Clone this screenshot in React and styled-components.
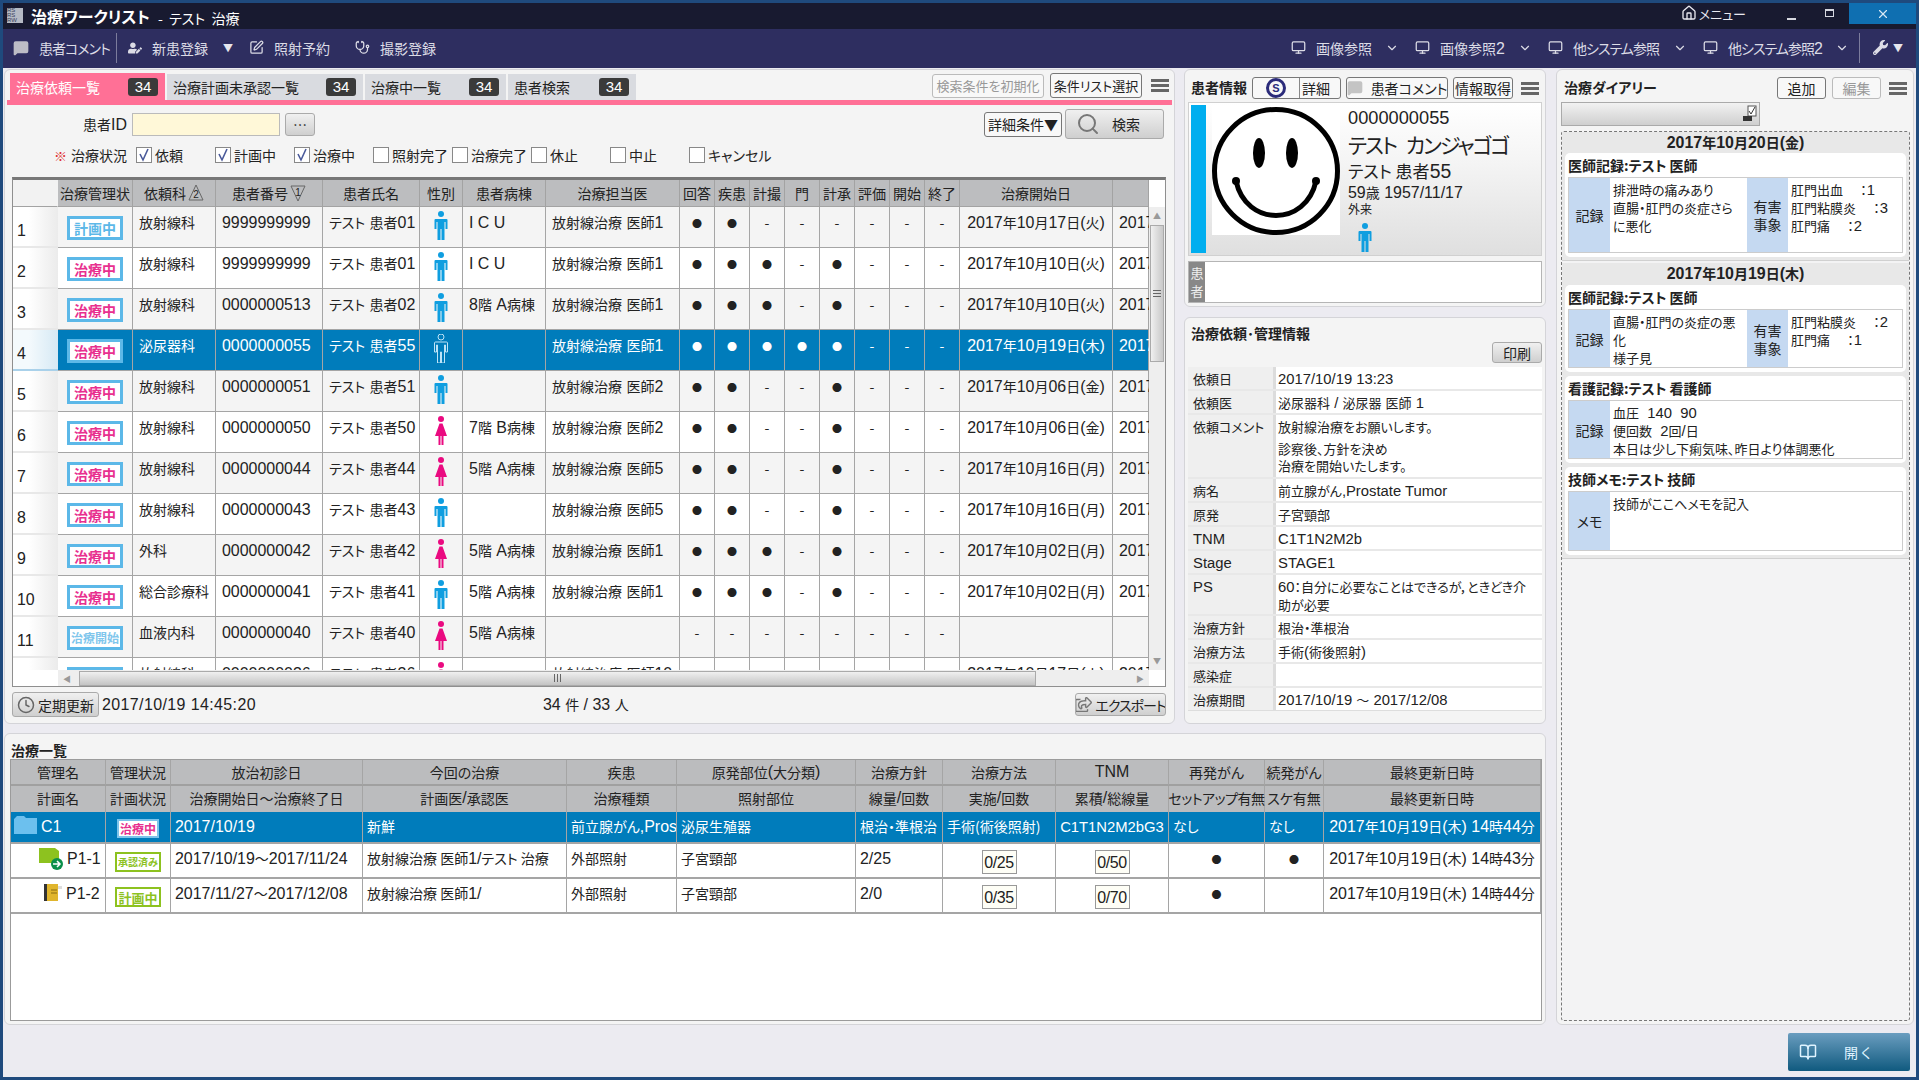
import React from 'react'
import styled, { createGlobalStyle } from 'styled-components'
import { BookOpen, ChevronDown, Clock, House, MessageSquare, Monitor, Search, SquarePen, Stethoscope, X } from 'lucide-react'
import { FaRegShareSquare, FaUserEdit, FaWrench } from 'react-icons/fa'

const GlobalStyle = createGlobalStyle`
  * { box-sizing: border-box; }
  html, body { margin: 0; padding: 0; }
  body {
    width: 1919px;
    height: 1080px;
    overflow: hidden;
    background: #1f4a7d;
    color: #222;
    font-family: "Noto Sans CJK JP", "Liberation Sans", sans-serif;
    font-size: 14px;
    font-feature-settings: "palt";
  }
`;

const Frame = styled.div`
  width: 1919px;
  height: 1080px;
  padding: 3px;
  display: flex;
  flex-direction: column;
`;

// title bar
const TitleBar = styled.div`
  height: 26px;
  background: #181a30;
  color: #fff;
  display: flex;
  align-items: flex-start;
  padding-left: 4px;
  flex: none;
`;
const AppTile = styled.div`
  width: 16px;
  height: 15px;
  margin: 5px 8px 0 0;
  background: #b5bac4;
  color: #39415c;
  font-size: 6px;
  line-height: 5px;
  overflow: hidden;
  font-family: "Liberation Sans", sans-serif;
`;
const AppName = styled.div`
  font-size: 16px;
  font-weight: 700;
  line-height: 26px;
`;
const AppUser = styled.div`
  font-size: 14px;
  line-height: 30px;
  margin-left: 8px;
  white-space: pre;
`;
const MenuLink = styled.div`
  margin-left: auto;
  display: flex;
  align-items: center;
  gap: 2px;
  height: 20px;
  font-size: 13px;
  color: #e8e8f0;
`;
const WinButton = styled.div`
  width: 9px;
  margin-left: ${p => p.$ml}px;
  margin-top: ${p => p.$mt}px;
  height: ${p => p.$h}px;
  border: ${p => p.$box ? '1.5px solid #d6d8e0' : 'none'};
  border-top-width: ${p => p.$box ? '2px' : '0'};
  background: ${p => p.$box ? 'transparent' : '#d6d8e0'};
`;
const CloseButton = styled.div`
  width: 67px;
  height: 21px;
  margin-left: 15px;
  background: #0f6fb1;
  color: #d8e8f4;
  display: flex;
  align-items: center;
  justify-content: center;
`;

// toolbar
const Toolbar = styled.div`
  height: 39px;
  background: #2e2e60;
  color: #dcdce6;
  display: flex;
  align-items: center;
  padding: 0 0 2px 10px;
  flex: none;
`;
const ToolItem = styled.div`
  width: ${p => p.$w}px;
  display: flex;
  align-items: center;
  gap: ${p => p.$gap || 10}px;
  padding-right: ${p => p.$pr || 0}px;
  white-space: nowrap;
  flex: none;
  svg { flex: none; }
`;
const ToolText = styled.span`
  letter-spacing: ${p => p.$ls || 0}px;
`;
const ToolSep = styled.div`
  width: 1px;
  height: 30px;
  background: #7c7c9c;
  margin: 0 ${p => p.$mr}px 0 ${p => p.$ml || 0}px;
  flex: none;
`;
const Caret = styled.span`
  font-size: 10px;
  color: #e6e6ee;
  margin-left: ${p => p.$ml || 0}px;
`;
const Chevron = styled(ChevronDown)`
  margin-left: auto;
`;
const ToolRight = styled.div`
  margin-left: auto;
  display: flex;
  align-items: center;
  padding-right: 13px;
`;

// body layout
const Body = styled.div`
  flex: 1;
  min-height: 0;
  background: #ecebf1;
  display: flex;
  gap: 10px;
  padding: 1px 2px 0 1px;
`;
const LeftCol = styled.div`
  width: 1542px;
  display: flex;
  flex-direction: column;
  gap: 9px;
`;
const TopRow = styled.div`
  height: 655px;
  display: flex;
  gap: 9px;
`;
const SideCol = styled.div`
  width: 362px;
  display: flex;
  flex-direction: column;
  gap: 10px;
`;
const RightCol = styled.div`
  width: 358px;
  display: flex;
  flex-direction: column;
  gap: 8px;
`;
const Panel = styled.div`
  background: #f4f4f4;
  border: 1px solid #d4d4d8;
  border-radius: 6px;
  display: flex;
  flex-direction: column;
  width: ${p => p.$w ? p.$w + 'px' : 'auto'};
  height: ${p => p.$h}px;
  flex: none;
`;

// worklist
const TabRow = styled.div`
  margin: 3px 2px 0;
  padding-left: 3px;
  height: 32px;
  border-bottom: 5px solid #ff7096;
  display: flex;
  align-items: flex-end;
  gap: 2px;
  flex: none;
`;
const Tab = styled.div`
  width: ${p => p.$w}px;
  height: ${p => p.$active ? 27 : 26}px;
  background: ${p => p.$active ? '#ff7096' : '#d9dbe0'};
  color: ${p => p.$active ? '#fff' : '#222'};
  display: flex;
  align-items: center;
  justify-content: space-between;
  padding: 0 7px 0 6px;
  white-space: nowrap;
`;
const TabCount = styled.span`
  width: 30px;
  height: 18px;
  border-radius: 3px;
  background: #3a3a3a;
  color: #fff;
  font: 15px/18px "Liberation Sans", sans-serif;
  text-align: center;
`;
const TabTools = styled.div`
  margin-left: auto;
  display: flex;
  align-items: center;
  gap: 6px;
  padding-right: 3px;
  align-self: flex-start;
`;
const Btn = styled.div`
  width: ${p => p.$w}px;
  height: ${p => p.$h || 25}px;
  margin-left: ${p => p.$ml || 0}px;
  background: #f8f8f8;
  border: 1px solid ${p => p.$muted ? '#bbb' : '#777'};
  border-radius: 3px;
  color: ${p => p.$muted ? '#999' : '#222'};
  font-size: ${p => p.$fs || 14}px;
  display: flex;
  align-items: center;
  justify-content: center;
  gap: ${p => p.$gap || 0}px;
  white-space: nowrap;
  flex: none;
  overflow: hidden;
  svg { flex: none; }
`;
const GrayBtn = styled(Btn)`
  background: linear-gradient(#f0f0f0, #cfcfcf);
  border-color: #aaa;
`;
const SearchBtn = styled(GrayBtn)`
  justify-content: flex-start;
  padding-left: 10px;
`;
const Hamburger = styled.div`
  width: 18px;
  height: 13px;
  margin-left: ${p => p.$ml || 0}px;
  background: repeating-linear-gradient(#666 0 3px, transparent 3px 5px);
  flex: none;
`;
const IdRow = styled.div`
  margin: 4px 10px 0 0;
  height: 30px;
  display: flex;
  align-items: center;
  flex: none;
`;
const IdLabel = styled.div`
  width: 122px;
  text-align: right;
  margin-right: 5px;
`;
const IdInput = styled.div`
  width: 148px;
  height: 23px;
  background: #fff8d8;
  border: 1px solid #bbb;
  margin-right: 5px;
`;
const Lookup = styled(GrayBtn)`
  margin-right: auto;
`;
const StatusRow = styled.div`
  margin-top: 8px;
  height: 16px;
  display: flex;
  align-items: center;
  padding-left: 49px;
  flex: none;
`;
const Required = styled.span`
  color: #e03030;
  font-size: 13px;
  width: 17px;
`;
const StatusLabel = styled.span`
  width: 65px;
`;
const CheckItem = styled.label`
  width: 79px;
  display: flex;
  align-items: center;
  gap: 3px;
  white-space: nowrap;
`;
const Box = styled.span`
  width: 16px;
  height: 16px;
  background: #fff;
  border: 1px solid #888;
  display: flex;
  align-items: center;
  justify-content: center;
  flex: none;
`;

const TableFrame = styled.div`
  margin: 14px 8px 0 7px;
  height: 510px;
  border: 1px solid #8f8f8f;
  border-top: 3px solid #777;
  background: #fff;
  display: flex;
  flex-direction: column;
  flex: none;
`;
const TableBody = styled.div`
  display: flex;
  height: 490px;
  flex: none;
`;
const Grid = styled.div`
  width: 1136px;
  overflow: hidden;
`;
const COLUMNS = '45px 75px 83px 107px 97px 43px 83px 134px repeat(8, 35px) 153px 36px';
const HeadRow = styled.div`
  display: grid;
  grid-template-columns: ${COLUMNS};
  height: 27px;
`;
const HeadCell = styled.div`
  background: ${p => p.$corner ? '#f2f2f2' : '#bcbdbf'};
  border-right: 1px solid ${p => p.$corner ? '#f2f2f2' : '#a3a3a3'};
  border-bottom: 1px solid #a3a3a3;
  display: flex;
  align-items: center;
  justify-content: center;
  white-space: nowrap;
`;
const Row = styled.div`
  display: grid;
  grid-template-columns: ${COLUMNS};
  height: 41px;
  background: ${p => p.$sel ? '#007cbb' : p.$alt ? '#f4f4f4' : '#fff'};
  color: ${p => p.$sel ? '#fff' : '#222'};
`;
const RowNum = styled.div`
  background: ${p => p.$sel
    ? 'linear-gradient(90deg, #f4fafd 35%, #d6e9f4)'
    : 'linear-gradient(90deg, #fff 35%, #ebebeb)'};
  border-bottom: 2px solid ${p => p.$sel ? '#a9d1ea' : '#e8e8e8'};
  color: #222;
  padding: 12px 0 0 4px;
  line-height: 22px;
`;
const Cell = styled.div`
  border-right: 1px solid #a5a5a5;
  border-bottom: 1px solid #a5a5a5;
  padding: 4px 0 0 ${p => p.$center ? 0 : 6}px;
  line-height: 22px;
  text-align: ${p => p.$center ? 'center' : 'left'};
  white-space: nowrap;
`;
const BadgeCell = styled(Cell)`
  padding: 9px 0 0;
  display: flex;
  justify-content: center;
  align-items: flex-start;
`;
const Dot = styled.span`
  font-size: 10px;
`;
const Badge = styled.div`
  display: inline-flex;
  vertical-align: top;
  width: ${p => p.$w || 56}px;
  height: ${p => p.$h || 24}px;
  margin-top: ${p => p.$mt || 0}px;
  background: #fff;
  border: ${p => p.$bw || 3}px solid ${p => p.$line};
  color: ${p => p.$ink};
  font-size: ${p => p.$fs || 14}px;
  font-weight: 700;
  line-height: 1;
  align-items: center;
  justify-content: center;
  white-space: nowrap;
`;
const Lat = styled.span`
  font-family: "Liberation Sans", sans-serif;
  font-size: 1.14em;
`;
const SortMark = styled.svg`
  margin-left: 2px;
  flex: none;
`;

// scrollbars
const VScroll = styled.div`
  width: 16px;
  display: flex;
  flex-direction: column;
  align-items: center;
  padding-top: 27px;
  background: linear-gradient(#fff 27px, #eeeeee 27px);
`;
const VThumb = styled.div`
  width: 14px;
  height: 137px;
  margin-top: 5px;
  background: linear-gradient(90deg, #f0f0f0, #c8c8c8);
  border: 1px solid #aaa;
  display: flex;
  align-items: center;
  justify-content: center;
`;
const ScrollArrow = styled.span`
  color: #999;
  font-size: 8px;
  line-height: 9px;
  margin: ${p => p.$m || 0};
`;
const HScroll = styled.div`
  height: 16px;
  margin-left: 45px;
  background: linear-gradient(90deg, #eee 1091px, #fff 1091px);
  display: flex;
  align-items: center;
  flex: none;
`;
const HThumb = styled.div`
  width: 957px;
  height: 15px;
  background: linear-gradient(#f0f0f0, #c4c4c4);
  border: 1px solid #aaa;
  margin-left: 8px;
  display: flex;
  align-items: center;
  justify-content: center;
`;
const Grip = styled.span`
  width: 7px;
  height: 8px;
  background: repeating-linear-gradient(90deg, #666 0 1px, transparent 1px 3px);
`;
const GripH = styled.span`
  width: 8px;
  height: 7px;
  background: repeating-linear-gradient(#666 0 1px, transparent 1px 3px);
`;

const StatusBar = styled.div`
  margin: 5px 8px 0 7px;
  display: flex;
  align-items: flex-start;
  height: 26px;
`;
const TimeText = styled.div`
  margin-left: 3px;
  line-height: 25px;
  width: 441px;
  letter-spacing: 0.4px;
`;
const CountText = styled.div`
  line-height: 25px;
`;
const ExportBtn = styled(GrayBtn)`
  margin-left: auto;
  margin-top: 1px;
  letter-spacing: -1px;
`;

// patient panel
const PanelHead = styled.div`
  margin-top: 7px;
  padding-left: 6px;
  height: 22px;
  display: flex;
  align-items: center;
  flex: none;
`;
const PanelTitle = styled.div`
  font-weight: 700;
  width: ${p => p.$w}px;
  padding-bottom: 3px;
  white-space: nowrap;
  flex: none;
`;
const DetailBtn = styled(Btn)`
  justify-content: flex-start;
`;
const SPart = styled.span`
  width: 47px;
  height: 100%;
  border-right: 1px solid #888;
  display: flex;
  align-items: center;
  justify-content: center;
`;
const Sbadge = styled.span`
  width: 20px;
  height: 20px;
  border: 3px solid #2b2b7a;
  border-radius: 50%;
  color: #2b2b7a;
  font: 700 11px/14px "Liberation Sans", sans-serif;
  text-align: center;
`;
const DetailText = styled.span`
  margin-left: 2px;
`;
const PatientCard = styled.div`
  margin: 3px 3px 0;
  height: 154px;
  border: 1px solid #d0d0d0;
  background: linear-gradient(#fff, #f4f4f4 40%, #dfdfdf);
  padding: 2px;
  display: flex;
  flex: none;
`;
const ColorBar = styled.div`
  width: 15px;
  background: #00aeef;
  flex: none;
`;
const Photo = styled.div`
  width: 128px;
  height: 130px;
  background: #fff;
  margin-left: 6px;
  flex: none;
`;
const PatientInfo = styled.div`
  margin-left: 8px;
  display: flex;
  flex-direction: column;
  white-space: nowrap;
`;
const Pid = styled.div`
  font-size: 16px;
  line-height: 22px;
  margin-top: 1px;
`;
const KanaName = styled.div`
  font-size: 21px;
  line-height: 30px;
  letter-spacing: -2px;
  word-spacing: 7px;
`;
const Kname = styled.div`
  font-size: 17px;
  line-height: 23px;
`;
const Birth = styled.div`
  line-height: 19px;
`;
const Visit = styled.div`
  font-size: 12px;
  line-height: 14px;
`;
const SexIcon = styled.div`
  margin: auto 0 0 10px;
  height: 30px;
`;
const CommentBox = styled.div`
  margin: 5px 3px 0;
  height: 42px;
  background: #fff;
  border: 1px solid #b5b5b5;
  display: flex;
  flex: none;
`;
const CommentTag = styled.div`
  width: 16px;
  background: #888;
  color: #eee;
  font-size: 13px;
  line-height: 18px;
  text-align: center;
  padding-top: 2px;
`;

// request panel
const ReqTitle = styled(PanelTitle)`
  margin: 5px 0 0 6px;
  line-height: 20px;
  padding-bottom: 0;
`;
const PrintBtn = styled(GrayBtn)`
  align-self: flex-end;
  margin: -1px 3px 0 0;
`;
const InfoTable = styled.div`
  margin: 4px 3px 0;
  display: flex;
  flex-direction: column;
  gap: 2px;
  background: #e8e8e8;
  border-bottom: 1px solid #ddd;
  font-size: 13px;
`;
const InfoRow = styled.div`
  height: ${p => p.$h || 22}px;
  display: grid;
  grid-template-columns: 85px 3px 1fr;
  line-height: 17px;
`;
const InfoKey = styled.div`
  background: #efefef;
  padding: 3px 0 0 5px;
  white-space: nowrap;
`;
const InfoDiv = styled.div`
  background: #dcdcdc;
`;
const InfoVal = styled.div`
  background: #fff;
  padding: 3px 4px 0 2px;
`;
const GapLine = styled.div`
  height: 5px;
`;

// treatment list
const ListTitle = styled.div`
  font-weight: 700;
  font-size: 14px;
  margin-left: 6px;
  height: 25px;
  line-height: 33px;
  flex: none;
`;
const ListFrame = styled.div`
  margin: 0 3px 3px 5px;
  flex: 1;
  background: #fff;
  border: 1px solid #9b9b9b;
`;
const LIST_COLUMNS = '95px 65px 192px 204px 110px 179px 87px 113px 113px 96px 59px 1fr';
const ListHead = styled.div`
  display: grid;
  grid-template-columns: ${LIST_COLUMNS};
  height: 26px;
  background: #bbbcbe;
`;
const ListHeadCell = styled.div`
  border-right: 1px solid #a5a5a5;
  border-bottom: ${p => p.$top ? '2px solid #a0a0a0' : 'none'};
  padding-bottom: ${p => p.$top ? 0 : 2}px;
  letter-spacing: ${p => p.$tight ? -0.5 : 0}px;
  display: flex;
  align-items: center;
  justify-content: center;
  white-space: nowrap;
`;
const ListRow = styled.div`
  display: grid;
  grid-template-columns: ${LIST_COLUMNS};
  height: ${p => p.$h}px;
  background: ${p => p.$sel ? '#007cbb' : '#fff'};
  color: ${p => p.$sel ? '#fff' : '#222'};
`;
const ListCell = styled.div`
  border-right: 1px solid #a5a5a5;
  border-bottom: 2px solid #a5a5a5;
  padding: 3px ${p => p.$center ? 0 : 4}px 0;
  line-height: 22px;
  white-space: nowrap;
  overflow: ${p => p.$clip ? 'hidden' : 'visible'};
  text-align: ${p => p.$center ? 'center' : 'left'};
`;
const NameCell = styled(ListCell)`
  padding: 4px 0 0 ${p => p.$indent}px;
  display: flex;
  gap: 4px;
`;
const TnmText = styled.span`
  font-size: 13px;
`;
const DoseBox = styled.div`
  display: inline-block;
  vertical-align: top;
  width: 35px;
  height: 24px;
  margin-top: 3px;
  background: #fefef6;
  border: 1px solid #999;
  line-height: 22px;
  text-align: center;
  letter-spacing: -0.4px;
`;

// diary
const DiaryPanel = styled(Panel)`
  padding: 7px 3px 3px 4px;
`;
const DiaryHead = styled.div`
  height: 22px;
  display: flex;
  align-items: center;
  padding-left: 3px;
  flex: none;
`;
const DiarySelect = styled.div`
  margin-top: 3px;
  width: 199px;
  height: 24px;
  background: linear-gradient(#f2f2f2, #cfcfcf);
  border: 1px solid #aaa;
  display: flex;
  justify-content: flex-end;
  align-items: center;
  flex: none;
`;
const DiaryScroll = styled.div`
  margin-top: 5px;
  flex: 1;
  border: 1px dashed #777;
  border-radius: 3px;
  background: #f3f3f4;
  display: flex;
  flex-direction: column;
  font-size: 13px;
`;
const DayGroup = styled.div`
  background: #e8e8e8;
  padding-bottom: 3px;
  margin-bottom: 2px;
  border-bottom: 1px solid #d0d0d0;
  display: flex;
  flex-direction: column;
  gap: 4px;
`;
const DayTitle = styled.div`
  height: ${p => p.$h}px;
  margin-bottom: -4px;
  font-weight: 700;
  font-size: 14px;
  line-height: 21px;
  text-align: center;
`;
const DiaryCard = styled.div`
  margin: 0 3px;
  background: #fff;
  border-radius: 5px;
  padding: 0 3px 4px;
`;
const CardTitle = styled.div`
  font-weight: 700;
  font-size: 14px;
  line-height: 24px;
  height: 24px;
`;
const CardTable = styled.div`
  display: grid;
  grid-template-columns: ${p => p.$two ? '41px 137px 41px 1fr' : '41px 1fr'};
  height: ${p => p.$h}px;
  border: 1px solid #ccc;
  line-height: 18px;
`;
const CardKey = styled.div`
  background: #c5d9f1;
  display: flex;
  align-items: center;
  justify-content: center;
  text-align: center;
  font-size: 14px;
`;
const CardVal = styled.div`
  padding: 3px 2px 0 3px;
  white-space: ${p => p.$wrap ? 'normal' : 'pre'};
`;
const Line = styled.div``;
const OpenBtn = styled.div`
  width: 122px;
  height: 38px;
  align-self: flex-end;
  margin-right: 4px;
  border-radius: 2px;
  background: linear-gradient(#6a9dbf, #105a7f);
  color: #dff3ff;
  display: flex;
  align-items: center;
  padding-left: 11px;
  gap: 27px;
  flex: none;
`;

const mix = s => String(s).split(/([ -~]+)/).map((part, i) => (i % 2 ? <Lat key={i}>{part}</Lat> : part));

const Person = ({ sex, outline, h = 29 }) => {
  const color = sex === 'F' ? '#ea0a80' : '#0f9ee0';
  const props = outline
    ? { fill: 'none', stroke: '#bde3f7', strokeWidth: 1 }
    : { fill: color };
  return (
    <svg width={14} height={h} viewBox="0 0 13 29">
      <circle cx="6.5" cy="3" r="3" {...props} />
      {sex === 'F'
        ? <path d="M5 7.5h3l4.5 12.5h-3.5v9h-2v-9h-1v9h-2v-9h-3.500z" {...props} />
        : <path d="M1 8h11a1 1 0 0 1 1 1v9h-2v-7h-1v18h-3v-11h-1v11h-3v-18h-1v7h-2v-9a1 1 0 0 1 1-1z" {...props} />}
    </svg>
  );
};

const Smiley = () => (
  <svg width="128" height="130" viewBox="0 0 128 130">
    <circle cx="64" cy="66" r="61.500" fill="none" stroke="#000" strokeWidth="5" />
    <ellipse cx="47" cy="48" rx="6" ry="15" />
    <ellipse cx="80" cy="48" rx="6" ry="15" />
    <path d="M24 76C34 122 94 122 104 76" fill="none" stroke="#000" strokeWidth="5" />
    <circle cx="24" cy="76" r="4" />
    <circle cx="104" cy="76" r="4" />
  </svg>
);

const Tick = () => (
  <svg width="14" height="14" viewBox="0 0 14 14">
    <path d="M3 6l3 6 5-11" fill="none" stroke="#4a5a9a" strokeWidth="1.600" />
  </svg>
);

const Sort = ({ n, down }) => (
  <SortMark width="16" height="18" viewBox="0 0 16 18">
    <path d={down ? 'M1 2h14l-7 15z' : 'M8 1l7 15H1z'} fill="none" stroke="#666" />
    <text x="8" y={down ? 12 : 14} fontSize="10" textAnchor="middle" fontFamily="Liberation Sans" fill="#222">{n}</text>
  </SortMark>
);

const STATUS = {
  plan: { text: '計画中', line: '#5cb8e8', ink: '#5cb8e8' },
  doing: { text: '治療中', line: '#5cb8e8', ink: '#e8308f' },
  start: { text: '治療開始', line: '#5cb8e8', ink: '#7fc6ec', fs: 12 },
};

const HEADERS = [
  '', '治療管理状', '依頼科', '患者番号', '患者氏名', '性別', '患者病棟', '治療担当医',
  '回答', '疾患', '計撮', '門', '計承', '評価', '開始', '終了', '治療開始日', '',
];

const ROWS = [
  ['plan', '放射線科', '9999999999', 'テスト 患者01', 'M', 'I C U', '放射線治療 医師1', '11------', '2017年10月17日(火)'],
  ['doing', '放射線科', '9999999999', 'テスト 患者01', 'M', 'I C U', '放射線治療 医師1', '111-1---', '2017年10月10日(火)'],
  ['doing', '放射線科', '0000000513', 'テスト 患者02', 'M', '8階 A病棟', '放射線治療 医師1', '111-1---', '2017年10月10日(火)'],
  ['doing', '泌尿器科', '0000000055', 'テスト 患者55', 'M', '', '放射線治療 医師1', '11111---', '2017年10月19日(木)'],
  ['doing', '放射線科', '0000000051', 'テスト 患者51', 'M', '', '放射線治療 医師2', '11--1---', '2017年10月06日(金)'],
  ['doing', '放射線科', '0000000050', 'テスト 患者50', 'F', '7階 B病棟', '放射線治療 医師2', '11--1---', '2017年10月06日(金)'],
  ['doing', '放射線科', '0000000044', 'テスト 患者44', 'F', '5階 A病棟', '放射線治療 医師5', '11--1---', '2017年10月16日(月)'],
  ['doing', '放射線科', '0000000043', 'テスト 患者43', 'M', '', '放射線治療 医師5', '11--1---', '2017年10月16日(月)'],
  ['doing', '外科', '0000000042', 'テスト 患者42', 'F', '5階 A病棟', '放射線治療 医師1', '111-1---', '2017年10月02日(月)'],
  ['doing', '総合診療科', '0000000041', 'テスト 患者41', 'M', '5階 A病棟', '放射線治療 医師1', '111-1---', '2017年10月02日(月)'],
  ['start', '血液内科', '0000000040', 'テスト 患者40', 'F', '5階 A病棟', '', '--------', ''],
  ['start', '放射線科', '0000000036', 'テスト 患者36', 'F', '', '放射線治療 医師10', '11--1---', '2017年10月17日(火)'],
];

const CHECKS = [
  ['依頼', true], ['計画中', true], ['治療中', true], ['照射完了'], ['治療完了'], ['休止'], ['中止'], ['キャンセル'],
];

const LIST_HEAD_TOP = ['管理名', '管理状況', '放治初診日', '今回の治療', '疾患', '原発部位(大分類)', '治療方針', '治療方法', 'TNM', '再発がん', '続発がん', '最終更新日時'];
const LIST_HEAD_BOTTOM = ['計画名', '計画状況', '治療開始日～治療終了日', '計画医/承認医', '治療種類', '照射部位', '線量/回数', '実施/回数', '累積/総線量', 'セットアップ有無', 'スケ有無', '最終更新日時'];

const Worklist = () => (
  <Panel $w={1171} $h={655}>
    <TabRow>
      <Tab $w={155} $active>治療依頼一覧<TabCount>34</TabCount></Tab>
      <Tab $w={196}>治療計画未承認一覧<TabCount>34</TabCount></Tab>
      <Tab $w={141}>治療中一覧<TabCount>34</TabCount></Tab>
      <Tab $w={128}>患者検索<TabCount>34</TabCount></Tab>
      <TabTools>
        <Btn $w={112} $h={24} $muted $fs={13}>検索条件を初期化</Btn>
        <Btn $w={92} $fs={13}>条件リスト選択</Btn>
        <Hamburger $ml={3} />
      </TabTools>
    </TabRow>
    <IdRow>
      <IdLabel>患者{mix('ID')}</IdLabel>
      <IdInput />
      <Lookup $w={30} $h={23}>…</Lookup>
      <Btn $w={78}>詳細条件▼</Btn>
      <SearchBtn $w={99} $h={30} $ml={3} $gap={12}><Search size={24} color="#777" />検索</SearchBtn>
    </IdRow>
    <StatusRow>
      <Required>※</Required>
      <StatusLabel>治療状況</StatusLabel>
      {CHECKS.map(([label, on]) => (
        <CheckItem key={label}><Box>{on && <Tick />}</Box>{label}</CheckItem>
      ))}
    </StatusRow>
    <TableFrame>
      <TableBody>
        <Grid>
          <HeadRow>
            {HEADERS.map((h, i) => (
              <HeadCell key={i} $corner={i === 0}>
                {h}
                {i === 2 && <Sort n={2} />}
                {i === 3 && <Sort n={1} down />}
              </HeadCell>
            ))}
          </HeadRow>
          {ROWS.map((r, i) => {
            const sel = i === 3;
            const st = STATUS[r[0]];
            return (
              <Row key={i} $alt={i % 2 === 0} $sel={sel}>
                <RowNum $sel={sel}>{mix(i + 1)}</RowNum>
                <BadgeCell><Badge $line={st.line} $ink={st.ink} $fs={st.fs}>{st.text}</Badge></BadgeCell>
                <Cell>{r[1]}</Cell>
                <Cell>{mix(r[2])}</Cell>
                <Cell>{mix(r[3])}</Cell>
                <Cell $center><Person sex={r[4]} outline={sel} /></Cell>
                <Cell>{mix(r[5])}</Cell>
                <Cell>{mix(r[6])}</Cell>
                {r[7].split('').map((c, j) => (
                  <Cell key={j} $center>{c === '1' ? <Dot>●</Dot> : '-'}</Cell>
                ))}
                <Cell $center>{mix(r[8])}</Cell>
                <Cell>{mix(r[8])}</Cell>
              </Row>
            );
          })}
        </Grid>
        <VScroll>
          <ScrollArrow $m="4px 0 0">▲</ScrollArrow>
          <VThumb><GripH /></VThumb>
          <ScrollArrow $m="auto 0 5px">▼</ScrollArrow>
        </VScroll>
      </TableBody>
      <HScroll>
        <ScrollArrow $m="0 0 0 5px">◀</ScrollArrow>
        <HThumb><Grip /></HThumb>
        <ScrollArrow $m="0 0 0 100px">▶</ScrollArrow>
      </HScroll>
    </TableFrame>
    <StatusBar>
      <GrayBtn $w={87} $gap={3}><Clock size={18} color="#666" />定期更新</GrayBtn>
      <TimeText>{mix('2017/10/19 14:45:20')}</TimeText>
      <CountText>{mix('34 ')}件{mix(' / 33 ')}人</CountText>
      <ExportBtn $w={91} $h={23} $gap={3}><FaRegShareSquare size={17} color="#777" />エクスポート</ExportBtn>
    </StatusBar>
  </Panel>
);

const PatientPanel = () => (
  <Panel $h={238}>
    <PanelHead>
      <PanelTitle $w={61}>患者情報</PanelTitle>
      <DetailBtn $w={89} $h={22}><SPart><Sbadge>S</Sbadge></SPart><DetailText>詳細</DetailText></DetailBtn>
      <Btn $w={102} $h={22} $gap={8} $ml={5}>
        <MessageSquare size={16} fill="#c4c4c4" color="#c4c4c4" />患者コメント
      </Btn>
      <Btn $w={60} $h={22} $ml={5}>情報取得</Btn>
      <Hamburger $ml={8} />
    </PanelHead>
    <PatientCard>
      <ColorBar />
      <Photo><Smiley /></Photo>
      <PatientInfo>
        <Pid><Lat>0000000055</Lat></Pid>
        <KanaName>テスト カンジャゴゴ</KanaName>
        <Kname>テスト 患者{mix('55')}</Kname>
        <Birth>{mix('59')}歳{mix(' 1957/11/17')}</Birth>
        <Visit>外来</Visit>
        <SexIcon><Person sex="M" /></SexIcon>
      </PatientInfo>
    </PatientCard>
    <CommentBox>
      <CommentTag>患<br />者</CommentTag>
    </CommentBox>
  </Panel>
);

const INFO = [
  ['依頼日', ['2017/10/19 13:23']],
  ['依頼医', ['泌尿器科 / 泌尿器 医師 1']],
  ['依頼コメント', ['放射線治療をお願いします。', null, '診察後、方針を決め', '治療を開始いたします。'], 62],
  ['病名', ['前立腺がん,Prostate Tumor']],
  ['原発', ['子宮頸部']],
  ['TNM', ['C1T1N2M2b']],
  ['Stage', ['STAGE1']],
  ['PS', ['60：自分に必要なことはできるが，ときどき介助が必要'], 39],
  ['治療方針', ['根治・準根治']],
  ['治療方法', ['手術(術後照射)']],
  ['感染症', []],
  ['治療期間', ['2017/10/19 ～ 2017/12/08']],
];

const RequestPanel = () => (
  <Panel $h={407}>
    <ReqTitle $w={200}>治療依頼･管理情報</ReqTitle>
    <PrintBtn $w={50} $h={21}>印刷</PrintBtn>
    <InfoTable>
      {INFO.map(([key, lines, h]) => (
        <InfoRow key={key} $h={h}>
          <InfoKey>{mix(key)}</InfoKey>
          <InfoDiv />
          <InfoVal>
            {lines.map((l, i) => (l ? <Line key={i}>{mix(l)}</Line> : <GapLine key={i} />))}
          </InfoVal>
        </InfoRow>
      ))}
    </InfoTable>
  </Panel>
);

const FolderIcon = () => (
  <svg width="23" height="18" viewBox="0 0 23 18">
    <path d="M0 3l3-3h7l2 2h11v16H0z" fill="#6cc0ee" />
  </svg>
);
const PlanIcon = () => (
  <svg width="24" height="22" viewBox="0 0 24 22">
    <path d="M0 0h16l4 3v12H0z" fill="#8dc21f" />
    <circle cx="18" cy="16" r="6" fill="#0a8f4a" />
    <path d="M14 16h7m-3-3l3 3-3 3" stroke="#fff" strokeWidth="1.500" fill="none" />
  </svg>
);
const BookIcon = () => (
  <svg width="18" height="18" viewBox="0 0 18 18">
    <rect x="0" y="1" width="3" height="17" fill="#333" />
    <rect x="3" y="1" width="11" height="17" fill="#e0b52c" />
    <path d="M7 7h6M7 10h6" stroke="#8a6d10" />
    <rect x="14" y="3" width="4" height="3" fill="#ddd" />
  </svg>
);

const TreatmentList = () => (
  <Panel $h={292}>
    <ListTitle>治療一覧</ListTitle>
    <ListFrame>
      <ListHead>{LIST_HEAD_TOP.map(h => <ListHeadCell key={h} $top>{mix(h)}</ListHeadCell>)}</ListHead>
      <ListHead>{LIST_HEAD_BOTTOM.map((h, i) => <ListHeadCell key={i} $tight={i === 9}>{mix(h)}</ListHeadCell>)}</ListHead>
      <ListRow $h={32} $sel>
        <NameCell $indent={3}><FolderIcon />{mix('C1')}</NameCell>
        <ListCell $center>
          <Badge $w={42} $h={19} $bw={2} $mt={4} $line="#7cc3ea" $ink="#e8308f" $fs={12}>治療中</Badge>
        </ListCell>
        <ListCell>{mix('2017/10/19')}</ListCell>
        <ListCell>新鮮</ListCell>
        <ListCell $clip>前立腺がん{mix(',Prostate')}</ListCell>
        <ListCell>泌尿生殖器</ListCell>
        <ListCell>根治・準根治</ListCell>
        <ListCell>手術(術後照射)</ListCell>
        <ListCell $center><TnmText>{mix('C1T1N2M2bG3')}</TnmText></ListCell>
        <ListCell>なし</ListCell>
        <ListCell>なし</ListCell>
        <ListCell $center>{mix('2017年10月19日(木) 14時44分')}</ListCell>
      </ListRow>
      <ListRow $h={35}>
        <NameCell $indent={28}><PlanIcon />{mix('P1-1')}</NameCell>
        <ListCell $center>
          <Badge $w={46} $h={20} $bw={2} $mt={5} $line="#8dc21f" $ink="#8dc21f" $fs={10}>承認済み</Badge>
        </ListCell>
        <ListCell>{mix('2017/10/19～2017/11/24')}</ListCell>
        <ListCell>放射線治療 医師{mix('1/')}テスト 治療</ListCell>
        <ListCell>外部照射</ListCell>
        <ListCell>子宮頸部</ListCell>
        <ListCell>{mix('2/25')}</ListCell>
        <ListCell $center><DoseBox>{mix('0/25')}</DoseBox></ListCell>
        <ListCell $center><DoseBox>{mix('0/50')}</DoseBox></ListCell>
        <ListCell $center><Dot>●</Dot></ListCell>
        <ListCell $center><Dot>●</Dot></ListCell>
        <ListCell $center>{mix('2017年10月19日(木) 14時43分')}</ListCell>
      </ListRow>
      <ListRow $h={35}>
        <NameCell $indent={33}><BookIcon />{mix('P1-2')}</NameCell>
        <ListCell $center>
          <Badge $w={46} $h={20} $bw={2} $mt={5} $line="#8dc21f" $ink="#8dc21f" $fs={13}>計画中</Badge>
        </ListCell>
        <ListCell>{mix('2017/11/27～2017/12/08')}</ListCell>
        <ListCell>放射線治療 医師{mix('1/')}</ListCell>
        <ListCell>外部照射</ListCell>
        <ListCell>子宮頸部</ListCell>
        <ListCell>{mix('2/0')}</ListCell>
        <ListCell $center><DoseBox>{mix('0/35')}</DoseBox></ListCell>
        <ListCell $center><DoseBox>{mix('0/70')}</DoseBox></ListCell>
        <ListCell $center><Dot>●</Dot></ListCell>
        <ListCell />
        <ListCell $center>{mix('2017年10月19日(木) 14時44分')}</ListCell>
      </ListRow>
    </ListFrame>
  </Panel>
);

const Lines = ({ items, wrap }) => (
  <CardVal $wrap={wrap}>{items.map((l, i) => <Line key={i}>{mix(l)}</Line>)}</CardVal>
);

const Diary = () => (
  <DiaryPanel $h={956}>
    <DiaryHead>
      <PanelTitle $w={213}>治療ダイアリー</PanelTitle>
      <Btn $w={49} $h={22}>追加</Btn>
      <Btn $w={49} $h={22} $muted $ml={6}>編集</Btn>
      <Hamburger $ml={8} />
    </DiaryHead>
    <DiarySelect>
      <svg width="18" height="20" viewBox="0 0 18 20">
        <rect x="7" y="2" width="8" height="10" fill="#fff" stroke="#555" />
        <path d="M8 7l2 3 4-7" stroke="#333" fill="none" />
        <rect x="2" y="12" width="9" height="5" fill="#333" />
      </svg>
    </DiarySelect>
    <DiaryScroll>
      <DayGroup>
        <DayTitle $h={21}>{mix('2017')}年{mix('10')}月{mix('20')}日{mix('(')}金{mix(')')}</DayTitle>
        <DiaryCard>
          <CardTitle>医師記録:テスト 医師</CardTitle>
          <CardTable $two $h={76}>
            <CardKey>記録</CardKey>
            <Lines wrap items={['排泄時の痛みあり', '直腸・肛門の炎症さらに悪化']} />
            <CardKey>有害<br />事象</CardKey>
            <Lines items={['肛門出血　 ：1', '肛門粘膜炎　 ：3', '肛門痛　 ：2']} />
          </CardTable>
        </DiaryCard>
      </DayGroup>
      <DayGroup>
        <DayTitle $h={22}>{mix('2017')}年{mix('10')}月{mix('19')}日{mix('(')}木{mix(')')}</DayTitle>
        <DiaryCard>
          <CardTitle>医師記録:テスト 医師</CardTitle>
          <CardTable $two $h={59}>
            <CardKey>記録</CardKey>
            <Lines wrap items={['直腸・肛門の炎症の悪化', '様子見']} />
            <CardKey>有害<br />事象</CardKey>
            <Lines items={['肛門粘膜炎　 ：2', '肛門痛　 ：1']} />
          </CardTable>
        </DiaryCard>
        <DiaryCard>
          <CardTitle>看護記録:テスト 看護師</CardTitle>
          <CardTable $h={59}>
            <CardKey>記録</CardKey>
            <Lines items={['血圧  140  90', '便回数  2回/日', '本日は少し下痢気味、昨日より体調悪化']} />
          </CardTable>
        </DiaryCard>
        <DiaryCard>
          <CardTitle>技師メモ:テスト 技師</CardTitle>
          <CardTable $h={60}>
            <CardKey>メモ</CardKey>
            <Lines items={['技師がここへメモを記入']} />
          </CardTable>
        </DiaryCard>
      </DayGroup>
    </DiaryScroll>
  </DiaryPanel>
);

const App = () => (
  <Frame>
    <GlobalStyle />
    <TitleBar>
      <AppTile>RS RS RW</AppTile>
      <AppName>治療ワークリスト</AppName>
      <AppUser>-  テスト  治療</AppUser>
      <MenuLink><House size={16} />メニュー</MenuLink>
      <WinButton $ml={41} $mt={15} $h={2} />
      <WinButton $ml={29} $mt={6} $h={8} $box />
      <CloseButton><X size={14} /></CloseButton>
    </TitleBar>
    <Toolbar>
      <ToolItem $w={103}><MessageSquare size={16} fill="#bdbdc6" color="#bdbdc6" /><ToolText $ls={-1}>患者コメント</ToolText></ToolItem>
      <ToolSep $mr={11} />
      <ToolItem $w={121}><FaUserEdit size={14} /><ToolText>新患登録</ToolText><Caret $ml={5}>▼</Caret></ToolItem>
      <ToolItem $w={106}><SquarePen size={15} /><ToolText>照射予約</ToolText></ToolItem>
      <ToolItem $w={90}><Stethoscope size={15} /><ToolText>撮影登録</ToolText></ToolItem>
      <ToolRight>
        <ToolItem $w={124} $pr={16}><Monitor size={15} /><ToolText>画像参照</ToolText><Chevron size={14} /></ToolItem>
        <ToolItem $w={133} $pr={16}><Monitor size={15} /><ToolText>画像参照{mix('2')}</ToolText><Chevron size={14} /></ToolItem>
        <ToolItem $w={155} $pr={16}><Monitor size={15} /><ToolText $ls={-1}>他システム参照</ToolText><Chevron size={14} /></ToolItem>
        <ToolItem $w={156} $pr={10}><Monitor size={15} /><ToolText $ls={-1}>他システム参照{mix('2')}</ToolText><Chevron size={14} /></ToolItem>
        <ToolSep $mr={13} />
        <FaWrench size={15} />
        <Caret $ml={5}>▼</Caret>
      </ToolRight>
    </Toolbar>
    <Body>
      <LeftCol>
        <TopRow>
          <Worklist />
          <SideCol>
            <PatientPanel />
            <RequestPanel />
          </SideCol>
        </TopRow>
        <TreatmentList />
      </LeftCol>
      <RightCol>
        <Diary />
        <OpenBtn><BookOpen size={18} />開 く</OpenBtn>
      </RightCol>
    </Body>
  </Frame>
);

export default App
